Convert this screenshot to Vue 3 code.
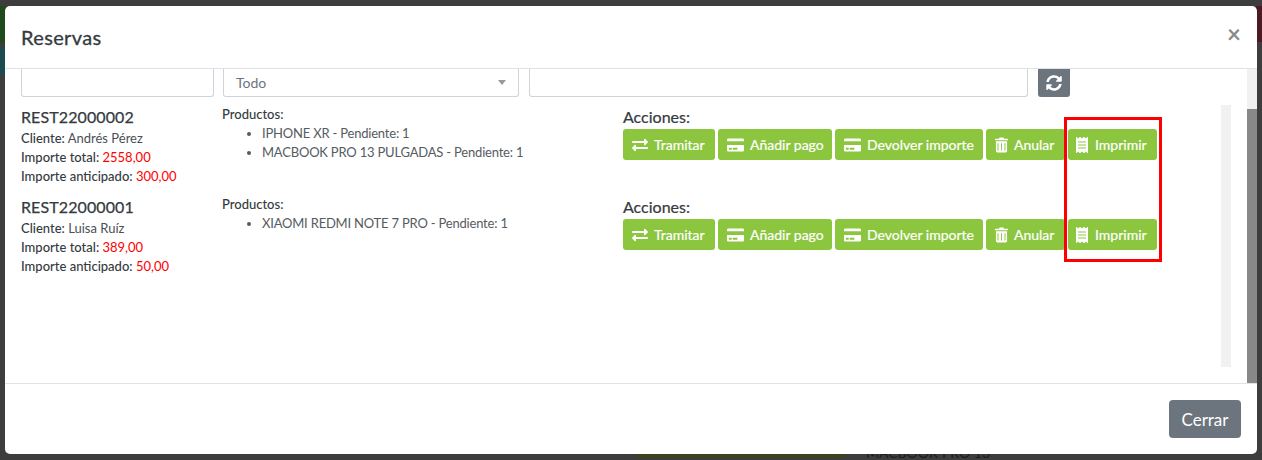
<template>
  <div class="page">
    <div class="back-green"></div>
    <div class="back-teal"></div>
    <div class="back-red"></div>
    <div class="back-bar"></div>
    <div class="back-text">MACBOOK PRO 13</div>
    <div class="modal">
      <div class="modal-header">
        <h3>Reservas</h3>
        <span class="close-btn">&times;</span>
      </div>

      <div class="modal-body">
        <div class="body-inner">
          <div class="filters">
            <input class="field f-code" type="text" />
            <div class="field f-select">
              <span>Todo</span>
              <i class="caret"></i>
            </div>
            <input class="field f-search" type="text" />
            <button class="refresh-btn">
              <svg viewBox="0 0 512 512" width="16" height="16">
                <path fill="#fff" :d="iconoRefrescar" />
              </svg>
            </button>
          </div>

          <div class="results">
            <div class="list">
              <div v-for="r in reservas" :key="r.codigo" class="reserva">
                <div class="info">
                  <h5>{{ r.codigo }}</h5>
                  <p><strong>Cliente:</strong> {{ r.cliente }}</p>
                  <p><strong>Importe total:</strong> <span class="red">{{ r.total }}</span></p>
                  <p><strong>Importe anticipado:</strong> <span class="red">{{ r.anticipado }}</span></p>
                </div>
                <div class="productos">
                  <strong>Productos:</strong>
                  <ul>
                    <li v-for="p in r.productos" :key="p">{{ p }}</li>
                  </ul>
                </div>
                <div class="acciones">
                  <div class="acciones-title">Acciones:</div>
                  <div class="botones">
                    <button v-for="a in acciones" :key="a.label" class="btn-accion">
                      <svg :viewBox="a.viewBox" :width="a.w" height="16">
                        <path fill="#fff" :d="a.path" />
                      </svg>
                      {{ a.label }}
                    </button>
                  </div>
                </div>
              </div>
              <div class="marca"></div>
            </div>
            <div class="inner-track"></div>
          </div>
        </div>
        <div class="outer-track"><div class="outer-thumb"></div></div>
      </div>

      <div class="modal-footer">
        <button class="btn-cerrar">Cerrar</button>
      </div>
    </div>
  </div>
</template>

<script setup>
const iconoRefrescar = 'M370.72 133.28C339.458 104.008 298.888 87.962 255.848 88c-77.458.068-144.328 53.178-162.791 126.85-1.344 5.363-6.122 9.15-11.651 9.15H24.103c-7.498 0-13.194-6.807-11.807-14.176C33.933 94.924 134.813 8 256 8c66.448 0 126.791 26.136 171.315 68.685L463.03 40.97C478.149 25.851 504 36.559 504 57.941V192c0 13.255-10.745 24-24 24H345.941c-21.382 0-32.09-25.851-16.971-40.971l41.75-41.749zM32 296h134.059c21.382 0 32.09 25.851 16.971 40.971l-41.75 41.75c31.262 29.273 71.835 45.319 114.876 45.28 77.418-.07 144.315-53.144 162.787-126.849 1.344-5.363 6.122-9.15 11.651-9.15h57.304c7.498 0 13.194 6.807 11.807 14.176C478.067 417.076 377.187 504 256 504c-66.448 0-126.791-26.136-171.315-68.685L48.97 471.03C33.851 486.149 8 475.441 8 454.059V320c0-13.255 10.745-24 24-24z'

const tarjeta = 'M0 432c0 26.5 21.5 48 48 48h480c26.5 0 48-21.5 48-48V256H0v176zm192-68c0-6.6 5.4-12 12-12h136c6.6 0 12 5.4 12 12v40c0 6.6-5.4 12-12 12H204c-6.6 0-12-5.4-12-12v-40zm-128 0c0-6.6 5.4-12 12-12h72c6.6 0 12 5.4 12 12v40c0 6.6-5.4 12-12 12H76c-6.6 0-12-5.4-12-12v-40zM576 80v48H0V80c0-26.5 21.5-48 48-48h480c26.5 0 48 21.5 48 48z'

const acciones = [
  {
    label: 'Tramitar',
    viewBox: '0 0 512 512',
    w: 16,
    path: 'M0 168v-16c0-13.255 10.745-24 24-24h360V80c0-21.367 25.899-32.042 40.971-16.971l80 80c9.372 9.373 9.372 24.569 0 33.941l-80 80C409.956 271.982 384 261.456 384 240v-48H24c-13.255 0-24-10.745-24-24zm488 152H128v-48c0-21.314-25.862-32.08-40.971-16.971l-80 80c-9.372 9.373-9.372 24.569 0 33.941l80 80C102.057 463.997 128 453.437 128 432v-48h360c13.255 0 24-10.745 24-24v-16c0-13.255-10.745-24-24-24z'
  },
  { label: 'Añadir pago', viewBox: '0 0 576 512', w: 17, path: tarjeta },
  { label: 'Devolver importe', viewBox: '0 0 576 512', w: 17, path: tarjeta },
  {
    label: 'Anular',
    viewBox: '0 0 448 512',
    w: 13,
    path: 'M160 0h128l24 40h120c9 0 16 7 16 16v24c0 9-7 16-16 16H16C7 96 0 89 0 80V56c0-9 7-16 16-16h120zM32 128h384v336c0 26.500-21.500 48-48 48H80c-26.500 0-48-21.500-48-48zm72 56c-9 0-16 7-16 16v240c0 9 7 16 16 16s16-7 16-16V200c0-9-7-16-16-16zm120 0c-9 0-16 7-16 16v240c0 9 7 16 16 16s16-7 16-16V200c0-9-7-16-16-16zm120 0c-9 0-16 7-16 16v240c0 9 7 16 16 16s16-7 16-16V200c0-9-7-16-16-16z'
  },
  {
    label: 'Imprimir',
    viewBox: '0 0 384 512',
    w: 12,
    path: 'M358.400 3.200L320 48 265.600 3.200a15.900 15.900 0 0 0-19.200 0L192 48 137.600 3.200a15.900 15.900 0 0 0-19.200 0L64 48 25.600 3.200C15-4.700 0 2.800 0 16v480c0 13.200 15 20.700 25.600 12.800L64 464l54.400 44.800a15.900 15.900 0 0 0 19.200 0L192 464l54.400 44.800a15.900 15.900 0 0 0 19.200 0L320 464l38.400 44.800c10.500 7.900 25.600.4 25.600-12.800V16c0-13.200-15-20.700-25.600-12.800zM320 360c0 4.400-3.600 8-8 8H72c-4.400 0-8-3.600-8-8v-16c0-4.400 3.600-8 8-8h240c4.400 0 8 3.600 8 8v16zm0-96c0 4.400-3.600 8-8 8H72c-4.400 0-8-3.600-8-8v-16c0-4.400 3.600-8 8-8h240c4.400 0 8 3.600 8 8v16zm0-96c0 4.400-3.600 8-8 8H72c-4.400 0-8-3.600-8-8v-16c0-4.400 3.600-8 8-8h240c4.400 0 8 3.600 8 8v16z'
  }
]

const reservas = [
  {
    codigo: 'REST22000002',
    cliente: 'Andrés Pérez',
    total: '2558,00',
    anticipado: '300,00',
    productos: ['IPHONE XR - Pendiente: 1', 'MACBOOK PRO 13 PULGADAS - Pendiente: 1']
  },
  {
    codigo: 'REST22000001',
    cliente: 'Luisa Ruíz',
    total: '389,00',
    anticipado: '50,00',
    productos: ['XIAOMI REDMI NOTE 7 PRO - Pendiente: 1']
  }
]
</script>

<style>
html, body {
  margin: 0;
  background: #3d3d3d;
  overflow: hidden;
}
</style>

<style scoped>
.page {
  position: relative;
  height: 460px;
  padding: 6px 5px;
  box-sizing: border-box;
  background: #3d3d3d;
  font-family: Lato, "Liberation Sans", sans-serif;
  font-size: 14px;
  color: #343a40;
  overflow: hidden;
}

/* restos de la pagina detras del modal */
.back-green {
  position: absolute;
  left: 0;
  top: 6px;
  width: 6px;
  height: 37px;
  background: #1f4a1c;
}

.back-teal {
  position: absolute;
  left: 0;
  top: 47px;
  width: 6px;
  height: 28px;
  background: #1d4a4f;
}

.back-red {
  position: absolute;
  right: 0;
  top: 6px;
  width: 6px;
  height: 36px;
  background: #4c1a22;
}

.back-bar {
  position: absolute;
  left: 636px;
  top: 450px;
  width: 210px;
  height: 7px;
  background: #3a4518;
  border-radius: 3px;
}

.back-text {
  position: absolute;
  left: 866px;
  top: 444px;
  font-size: 14px;
  color: #1c1c1c;
}

.modal {
  position: relative;
  height: 448px;
  display: flex;
  flex-direction: column;
  background: #fff;
  border-radius: 5px;
  overflow: hidden;
}

.modal-header {
  height: 63px;
  flex: none;
  box-sizing: border-box;
  display: flex;
  justify-content: space-between;
  align-items: center;
  padding: 0 16px;
  border-bottom: 1px solid #dee2e6;
}

.modal-header h3 {
  margin: 0;
  font-size: 20px;
  font-weight: 400;
  letter-spacing: 0.35px;
  -webkit-text-stroke: 0.3px #343a40;
  color: #343a40;
}

.close-btn {
  font-size: 24px;
  font-weight: 700;
  line-height: 1;
  color: #8a8a8a;
  margin-top: -7px;
}

.modal-body {
  flex: 1;
  display: flex;
  min-height: 0;
}

.body-inner {
  flex: 1;
  min-width: 0;
  padding-left: 16px;
}

.filters {
  display: flex;
  height: 28px;
  margin-bottom: 8px;
}

.field {
  box-sizing: border-box;
  height: 28px;
  padding: 0 12px;
  background: #fff;
  border: 1px solid #ced4da;
  border-top: 0;
  border-radius: 0 0 3px 3px;
  outline: none;
}

.f-code { width: 193px; }

.f-select {
  width: 296px;
  margin-left: 9px;
  display: flex;
  align-items: center;
  justify-content: space-between;
  color: #6c757d;
  font-size: 14px;
}

.caret {
  width: 0;
  height: 0;
  border-left: 4px solid transparent;
  border-right: 4px solid transparent;
  border-top: 5px solid #999;
}

.f-search {
  width: 499px;
  margin-left: 10px;
}

.refresh-btn {
  width: 32px;
  height: 28px;
  margin-left: 10px;
  padding: 0;
  display: flex;
  align-items: center;
  justify-content: center;
  background: #6c757d;
  border: 0;
  border-radius: 0 0 3px 3px;
}

.results {
  position: relative;
  display: flex;
  height: 262px;
}

.list {
  width: 1200px;
  font-size: 13px;
}

.inner-track {
  width: 10px;
  background: #f1f1f1;
}

.reserva {
  display: grid;
  grid-template-columns: 201px 401px 1fr;
  height: 90px;
}

.info h5 {
  margin: 2px 0 2px;
  font-size: 16px;
  line-height: 20px;
  font-weight: 400;
  letter-spacing: 0.1px;
  -webkit-text-stroke: 0.25px #343a40;
  color: #343a40;
}

.info p {
  margin: 0;
  line-height: 19px;
  font-size: 13px;
  color: #4a4f55;
}

.info strong,
.productos strong {
  font-weight: 500;
  color: #343a40;
}

.red { color: #f00; }

.productos {
  line-height: 19px;
  font-size: 13px;
  color: #555b61;
}

.productos ul {
  margin: 0;
  padding-left: 40px;
  letter-spacing: -0.2px;
}

.acciones-title {
  padding-top: 1px;
  margin-bottom: 1px;
  font-size: 16px;
  line-height: 22px;
  font-weight: 400;
  -webkit-text-stroke: 0.2px #343a40;
  color: #343a40;
}

.botones {
  display: flex;
  gap: 3px;
}

.btn-accion {
  height: 31px;
  box-sizing: border-box;
  padding: 0 0 0 9px;
  display: flex;
  align-items: center;
  gap: 6px;
  background: #8cc63f;
  border: 0;
  border-radius: 3px;
  font-family: inherit;
  font-size: 14px;
  -webkit-text-stroke: 0.2px #fff;
  color: #fff;
  white-space: nowrap;
}

.btn-accion:nth-child(1) { width: 92px; }
.btn-accion:nth-child(2) { width: 114px; }
.btn-accion:nth-child(3) { width: 148px; }
.btn-accion:nth-child(4) { width: 79px; }
.btn-accion:nth-child(5) { width: 89px; padding-left: 8px; gap: 7px; }

.marca {
  position: absolute;
  left: 1043px;
  top: 12px;
  width: 92px;
  height: 139px;
  border: 3px solid #f00;
}

.outer-track {
  width: 10px;
  flex: none;
  display: flex;
  padding-top: 40px;
  box-sizing: border-box;
  background: #f1f1f1;
}

.outer-thumb {
  width: 100%;
  background: #888;
}

.modal-footer {
  height: 71px;
  flex: none;
  box-sizing: border-box;
  display: flex;
  align-items: center;
  justify-content: flex-end;
  padding: 0 16px 0 0;
  border-top: 1px solid #e2e2e2;
}

.btn-cerrar {
  width: 72px;
  height: 38px;
  background: #6c757d;
  border: 0;
  border-radius: 4px;
  font-family: inherit;
  font-size: 17px;
  color: #fff;
}
</style>
